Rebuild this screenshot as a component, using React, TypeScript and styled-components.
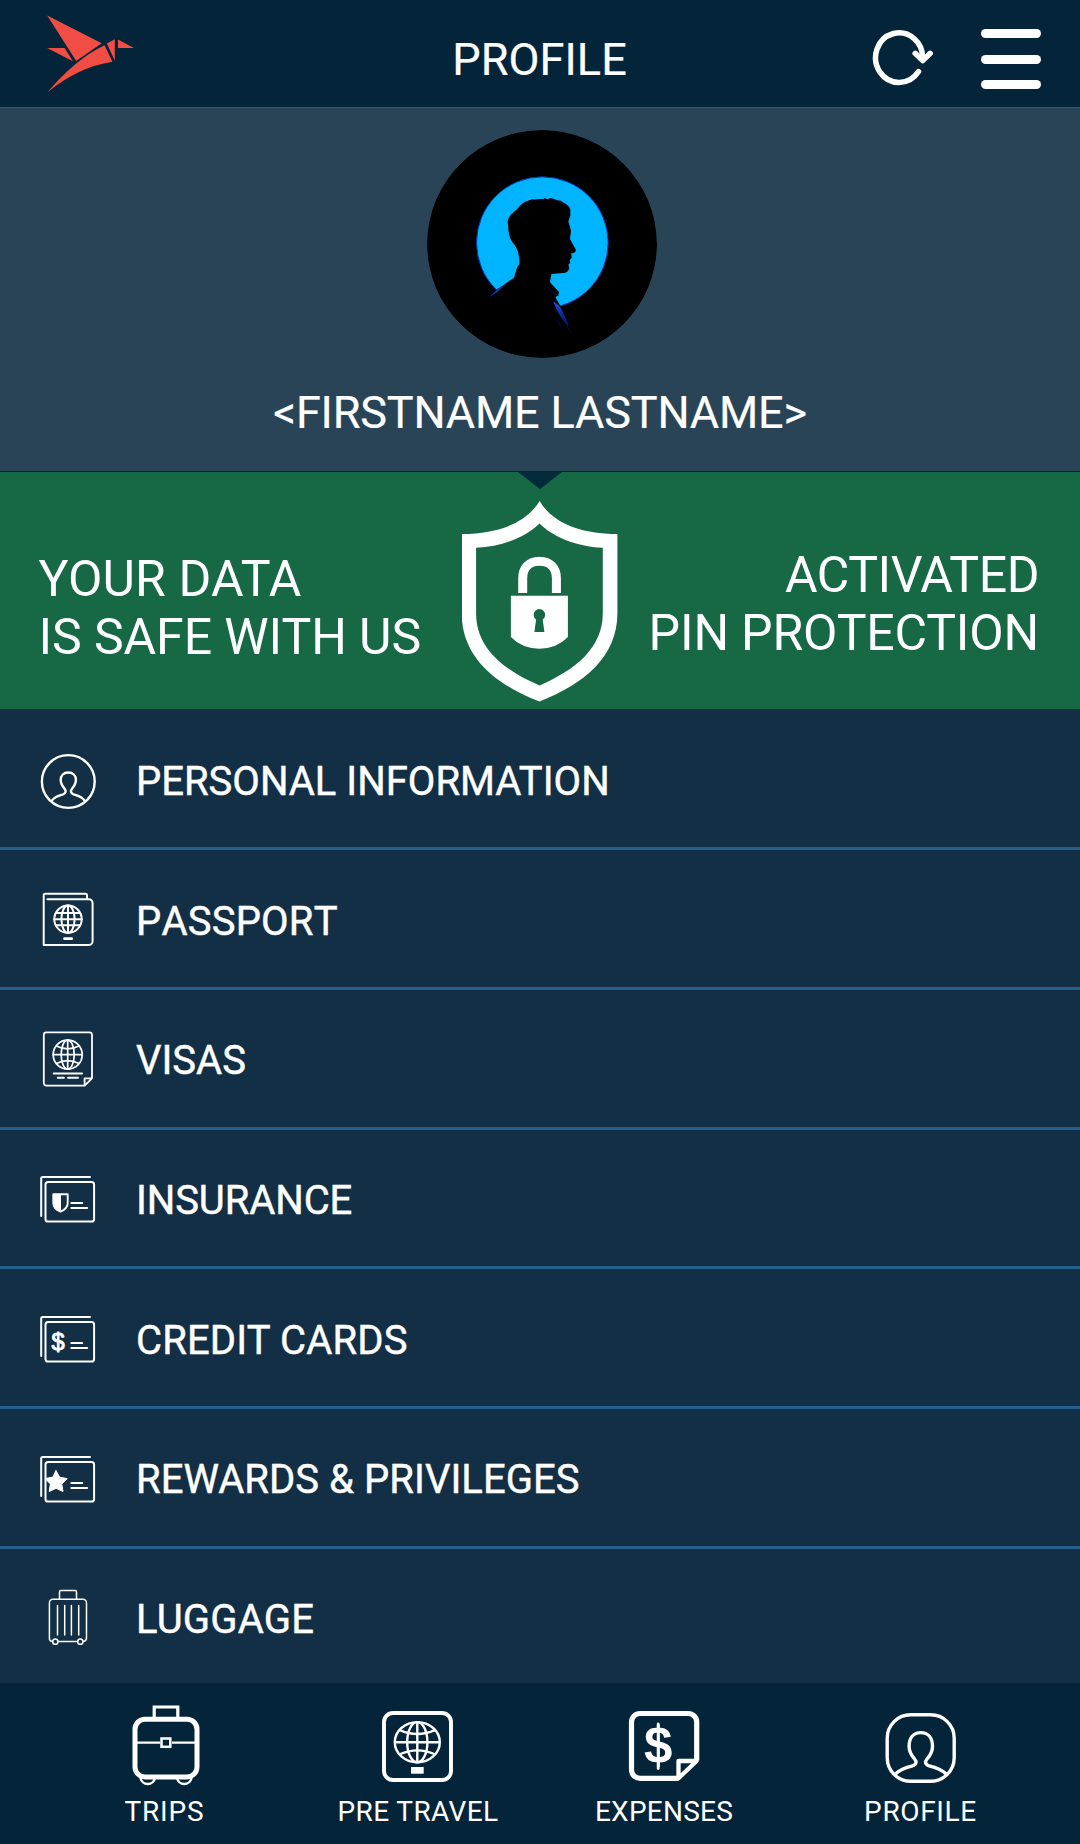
import React from 'react';
import styled, { createGlobalStyle } from 'styled-components';

const GlobalStyle = createGlobalStyle`
  * { box-sizing: border-box; }
  body { margin: 0; background: #04243a; }
`;

const Screen = styled.div`
  width: 1080px;
  height: 1844px;
  display: flex;
  flex-direction: column;
  overflow: hidden;
  background: #122f45;
  color: #fff;
  font-family: Roboto, 'Liberation Sans', sans-serif;
`;

const Header = styled.header`
  flex: none;
  height: 108px;
  display: grid;
  grid-template-columns: 1fr auto 1fr;
  background: #04243a;
  border-bottom: 1px solid #3b566a;
`;

const Logo = styled.svg`
  width: 90px;
  height: 80px;
  margin: 14px 0 0 46px;
`;

const Title = styled.h1`
  margin: 33px 1px 0 0;
  font-size: 45px;
  line-height: 54px;
  font-weight: 400;
  letter-spacing: 0.1px;
  -webkit-text-stroke: 0.2px #fff;
`;

const Actions = styled.div`
  display: flex;
  justify-content: flex-end;
  align-items: flex-start;
  gap: 45px;
  padding: 29px 39px 0 0;
`;

const IconButton = styled.button`
  display: block;
  padding: 0;
  border: 0;
  background: none;
  color: inherit;
`;

const MenuButton = styled(IconButton)`
  display: flex;
  flex-direction: column;
  gap: 16.5px;
`;

const MenuBar = styled.span`
  width: 60px;
  height: 9px;
  border-radius: 4.5px;
  background: #fff;
`;

const Hero = styled.section`
  flex: none;
  height: 364px;
  display: flex;
  flex-direction: column;
  align-items: center;
  gap: 28px;
  padding-top: 22px;
  background: #284456;
  border-bottom: 1px solid #042b3c;
`;

const Avatar = styled.svg`
  width: 230px;
  height: 228px;
  margin-left: 3px;
  border-radius: 50%;
`;

const UserName = styled.div`
  font-size: 45px;
  line-height: 54px;
  letter-spacing: -0.17px;
  -webkit-text-stroke: 0.2px #fff;
`;

const Banner = styled.section`
  flex: none;
  position: relative;
  height: 237px;
  display: grid;
  grid-template-columns: 1fr 156px 1fr;
  background: #176945;
`;

const Notch = styled.span`
  position: absolute;
  top: 0;
  left: 518px;
  border: solid transparent;
  border-width: 17px 22px 0;
  border-top-color: #042b3c;
`;

const BannerText = styled.p<{ $end?: boolean }>`
  margin: 0;
  padding: ${(p) => (p.$end ? '74px 41px 0 0' : '78px 0 0 38.5px')};
  display: flex;
  flex-direction: column;
  align-items: ${(p) => (p.$end ? 'flex-end' : 'flex-start')};
  white-space: nowrap;
  font-size: 50px;
  line-height: 58px;
`;

const BannerLine = styled.span<{ $track: number }>`
  letter-spacing: ${(p) => p.$track}px;
`;

const ShieldArt = styled.svg`
  width: 156px;
  height: 202px;
  margin-top: 28px;
`;

const List = styled.ul`
  flex: 1;
  margin: 0;
  padding: 0;
  list-style: none;
  overflow: hidden;
`;

const Row = styled.li<{ $height: number }>`
  height: ${(p) => p.$height}px;
  display: flex;
  align-items: flex-start;
  gap: 36px;
  padding: 36px 36px 0;
  border-bottom: 3px solid #245e8a;
`;

const RowIcon = styled.svg`
  flex: none;
  width: 64px;
  height: 68px;
  fill: none;
  stroke: #fff;
  stroke-linecap: round;
  stroke-linejoin: round;
`;

const RowLabel = styled.span<{ $drop: number; $track: number; $kerned: boolean }>`
  margin-top: ${(p) => p.$drop}px;
  font-size: 40px;
  line-height: 48px;
  font-kerning: ${(p) => (p.$kerned ? 'normal' : 'none')};
  letter-spacing: ${(p) => p.$track}px;
  -webkit-text-stroke: 0.45px #fff;
`;

const TabBar = styled.nav`
  flex: none;
  height: 161px;
  display: grid;
  grid-template-columns: 253px 254px 238px 275px;
  padding: 17px 0 0 38px;
  background: #04243a;
`;

const Tab = styled.a`
  display: flex;
  flex-direction: column;
  align-items: center;
  gap: 7px;
`;

const TabIcon = styled.svg`
  width: 80px;
  height: 88px;
  fill: none;
  stroke: #fff;
`;

const TabLabel = styled.span<{ $track: number }>`
  font-size: 28px;
  line-height: 34px;
  letter-spacing: ${(p) => p.$track}px;
`;

const Dollar = styled.text<{ $bold?: boolean }>`
  font-family: 'Liberation Sans', Arial, sans-serif;
  font-weight: ${(p) => (p.$bold ? 700 : 400)};
  text-anchor: middle;
  fill: #fff;
  stroke: ${(p) => (p.$bold ? 'none' : '#fff')};
  stroke-width: 1px;
`;

type GlobeProps = { cx: number; cy: number; rx: number; ry: number; w: number };

const Globe = ({ cx, cy, rx, ry, w }: GlobeProps) => {
  const dx = rx * 0.78;
  const dy = ry * 0.6;
  return (
    <g strokeWidth={w}>
      <ellipse cx={cx} cy={cy} rx={rx} ry={ry} />
      <ellipse cx={cx} cy={cy} rx={rx * 0.45} ry={ry} />
      <path d={`M${cx} ${cy - ry}V${cy + ry}M${cx - rx} ${cy}H${cx + rx}`} />
      <path d={`M${cx - dx} ${cy - dy}Q${cx} ${cy - dy * 0.35} ${cx + dx} ${cy - dy}`} />
      <path d={`M${cx - dx} ${cy + dy}Q${cx} ${cy + dy * 0.35} ${cx + dx} ${cy + dy}`} />
    </g>
  );
};

const PersonIcon = () => (
  <g strokeWidth="2.4">
    <circle cx="68.3" cy="72.5" r="26.4" />
    <path d="M51.8 91.6C54 88.5 58.5 86.5 63 85.3C66.3 84.2 66.2 81.7 64.6 79.7C61.8 76.5 60.7 73.8 60.7 71C60.7 66.5 63.8 63.5 68.3 63.5S75.9 66.5 75.9 71C75.9 73.8 74.8 76.5 72 79.7C70.4 81.7 70.3 84.2 73.6 85.3C78.1 86.5 82.6 88.5 84.8 91.6" />
  </g>
);

const PassportIcon = () => (
  <g strokeWidth="2">
    <path d="M47.3 49.3H89A3.600 3.600 0 0 1 92.600 52.900V91.300A3.600 3.600 0 0 1 89 94.900H43.700V45.300A1.600 1.600 0 0 1 45.300 43.700H85.400A1.600 1.600 0 0 1 87 45.300V49" />
    <circle cx="68" cy="69.2" r="13.7" />
    <ellipse cx="68" cy="69.2" rx="6.6" ry="13.7" />
    <path d="M68 55.5V83M54.3 69.2H81.7M56.5 63H79.5M56.5 75.300H79.500" />
    <path strokeWidth="2.7" d="M64.5 88.7H71.7" />
  </g>
);

const VisaIcon = () => (
  <g strokeWidth="1.8">
    <path d="M84.6 95.6H46.3A2.5 2.5 0 0 1 43.8 93.1V44.9A2.5 2.5 0 0 1 46.3 42.4H89.5A2.5 2.5 0 0 1 92 44.9V88.3ZV88.3H92" />
    <Globe cx={67.7} cy={64.7} rx={14.5} ry={14.5} w={1.7} />
    <path strokeWidth="2" d="M53.7 83.4H82M57.8 87.7H63.9M68 87.7H78" />
  </g>
);

const CardBase = () => (
  <g strokeWidth="2">
    <path d="M41.2 86V48.6A1.6 1.6 0 0 1 42.8 47H90" />
    <rect x="45.5" y="51.9" width="48.6" height="39.6" rx="2.6" />
    <path d="M71.3 73.1H82.2M71.3 78H87.2" />
  </g>
);

const InsuranceIcon = () => (
  <>
    <CardBase />
    <path strokeWidth="1.9" d="M53.3 64.3H67.7V73C67.7 77.5 64.5 80 60.5 81.7C56.5 80 53.3 77.5 53.3 73Z" />
    <path fill="#fff" stroke="none" d="M53 64H61V82C56 80 53 77 53 73Z" />
  </>
);

const CreditIcon = () => (
  <g transform="translate(0 1)">
    <CardBase />
    <Dollar x="58.1" y="79.6" fontSize="23.5">$</Dollar>
  </g>
);

const RewardsIcon = () => (
  <g transform="translate(0 1)">
    <CardBase />
    <path fill="#fff" strokeWidth="1" d="M56.1 60.7L59.6 67.2L67.2 68.6L61.8 74L63 81.500L56.1 78.3L49.2 81.5L50.4 74L45 68.6L52.6 67.2Z" />
  </g>
);

const LuggageIcon = () => (
  <g strokeWidth="1.5">
    <path d="M59.5 50V43A1.5 1.5 0 0 1 61 41.5H75A1.5 1.5 0 0 1 76.5 43V50" />
    <path d="M52.6 92.6A3.5 3.5 0 0 1 49.4 89V53.7A3.5 3.5 0 0 1 52.9 50.2H83A3.5 3.5 0 0 1 86.5 53.7V89A3.5 3.5 0 0 1 83 92.600M58 92.6H77.6" />
    <path d="M57.5 56.5V86M64.7 56.5V86M71.4 56.5V86M78.7 56.5V86" />
    <circle cx="55.3" cy="92.7" r="2.600" />
    <circle cx="80.3" cy="92.7" r="2.600" />
  </g>
);

const rows = [
  { label: 'PERSONAL INFORMATION', height: 141, drop: 13, track: 0, kerned: true, icon: <PersonIcon /> },
  { label: 'PASSPORT', height: 140, drop: 12, track: 0.2, kerned: false, icon: <PassportIcon /> },
  { label: 'VISAS', height: 140, drop: 11, track: 0, kerned: true, icon: <VisaIcon /> },
  { label: 'INSURANCE', height: 139, drop: 11, track: -0.1, kerned: true, icon: <InsuranceIcon /> },
  { label: 'CREDIT CARDS', height: 140, drop: 12, track: 0.15, kerned: true, icon: <CreditIcon /> },
  { label: 'REWARDS & PRIVILEGES', height: 140, drop: 11, track: 0.05, kerned: true, icon: <RewardsIcon /> },
  { label: 'LUGGAGE', height: 140, drop: 11, track: 0.2, kerned: true, icon: <LuggageIcon /> },
];

const tabs = [
  {
    label: 'TRIPS',
    track: 0.8,
    icon: (
      <>
        <path strokeWidth="3.2" d="M29.2 17V7H52.8V17" />
        <rect x="10" y="19.2" width="62" height="57.7" rx="10" strokeWidth="5" />
        <path strokeWidth="2.2" d="M10 42.6H35M47 42.6H72" />
        <rect x="36.5" y="38.5" width="8.8" height="8.3" strokeWidth="2.5" />
        <path strokeWidth="2.3" d="M15.3 78C16.5 82 19 84 22.7 84S29 82 30.2 78M51.8 78C53 82 55.5 84 59.2 84S65.5 82 66.7 78" />
      </>
    ),
  },
  {
    label: 'PRE TRAVEL',
    track: 0.4,
    icon: (
      <>
        <rect x="6" y="13" width="67" height="67" rx="9" strokeWidth="3.9" />
        <Globe cx={39.3} cy={42.2} rx={22.500} ry={20.1} w={2.4} />
        <rect x="33" y="67" width="12.7" height="6.7" fill="#fff" stroke="none" />
      </>
    ),
  },
  {
    label: 'EXPENSES',
    track: 0.25,
    icon: (
      <>
        <path strokeWidth="5.2" d="M54.5 78.3H16A8.5 8.5 0 0 1 7.5 69.8V22A8.5 8.5 0 0 1 16 13.5H64A8.5 8.5 0 0 1 72.7 22V60.5" />
        <path strokeWidth="4.3" strokeLinejoin="round" d="M54.5 78.3V61H72.6Z" />
        <Dollar $bold x="34.2" y="63.2" fontSize="51">$</Dollar>
        <path strokeWidth="2.8" strokeLinecap="round" d="M34.2 24V68.5" />
      </>
    ),
  },
  {
    label: 'PROFILE',
    track: 0.65,
    icon: (
      <g strokeWidth="3.4">
        <rect x="6.2" y="14.7" width="67" height="66.6" rx="23.5" />
        <path d="M14 74.2C19 69.5 25 67.3 31.5 65.8C35.5 64.8 36 61.5 33.5 58.8C29.5 54.5 28.1 50.5 28.1 46.5C28.1 38 32.5 32.6 39.8 32.6S51.5 38 51.5 46.5C51.5 50.5 50.1 54.5 46.1 58.8C43.6 61.5 44.1 64.8 48.1 65.8C54.6 67.3 60.6 69.5 65.6 74.2" />
      </g>
    ),
  },
];

export default function App() {
  return (
    <Screen>
      <GlobalStyle />
      <Header>
        <Logo viewBox="46 14 90 80" fill="#f04e45">
          <path d="M47.2 15.6L101.7 43.3L76.2 60.9Z" />
          <path d="M47.2 48L64.6 48L72.9 61.2Z" />
          <path d="M104.6 45.2L112.4 61.7Q78 67 47.2 92.5Q76 58.5 104.6 45.2Z" />
          <path d="M114.8 39.2V60.7L106.8 43.6Z" />
          <path d="M118 39.5L134 48H118Z" />
        </Logo>
        <Title>PROFILE</Title>
        <Actions>
          <IconButton aria-label="Refresh">
            <svg width="64" height="60" viewBox="872 29.400 64 60" display="block" fill="none" stroke="#fff" strokeWidth="5.5" strokeLinecap="round" strokeLinejoin="round">
              <path d="M918.5 72A23.5 24.8 0 1 1 922.5 60" />
              <path d="M915.2 53.7L922.7 61L930.2 53.7" />
            </svg>
          </IconButton>
          <MenuButton aria-label="Menu">
            <MenuBar />
            <MenuBar />
            <MenuBar />
          </MenuButton>
        </Actions>
      </Header>

      <Hero>
        <Avatar viewBox="79 60 690 684">
          <defs>
            <linearGradient id="lapel" x1="0" y1="0" x2="0.5" y2="1">
              <stop offset="0" stopColor="#1b56e8" />
              <stop offset="1" stopColor="#0a1470" />
            </linearGradient>
          </defs>
          <ellipse cx="424" cy="402" rx="345" ry="342" />
          <circle cx="425" cy="398" r="197.5" fill="#00b4ff" stroke="#0633b8" strokeWidth="3" />
          <path d="M225 610L262 570L283 542L340 503L350 470L356 463C357 430 348 412 338 400C322 380 324 360 321 335C323 318 336 308 350 297C362 280 376 273 395 268C408 270 418 265 428 268L432 264L440 268L450 264C465 268 470 272 480 272C492 280 506 286 509 298V318L503 334L511 362L508 387L526 420C524 428 518 430 512 430L513 443L507 450L509 458L503 464L506 474C502 487 496 489 485 489L452 492L448 517L475 546L473 556L464 562L483 594L530 640V680H280Z" />
          <path d="M262 569Q272 552 287 542L312 524L290 546Q270 556 262 569Z" fill="#0b4bd8" />
          <path d="M458 574Q478 584 486 606L505 646L496 644Q468 606 458 574Z" fill="url(#lapel)" />
          <path d="M445 535Q456 551 473 557" fill="none" stroke="#071d66" strokeWidth="3" />
          <path d="M473 628L480 652M496 640L508 665" fill="none" stroke="#070c50" strokeWidth="3" />
        </Avatar>
        <UserName>&lt;FIRSTNAME LASTNAME&gt;</UserName>
      </Hero>

      <Banner>
        <Notch />
        <BannerText>
          <BannerLine $track={0.15}>YOUR DATA</BannerLine>
          <BannerLine $track={-0.08}>IS SAFE WITH US</BannerLine>
        </BannerText>
        <ShieldArt viewBox="462.1 500 156 202" fill="#fff">
          <path fillRule="evenodd" d="M539.7 501C552 522 579 534 617.5 534V613C617.5 657 584 684 539.7 701.5C495 684 461.8 657 461.8 613V534C500 534 527 522 539.7 501ZM539.7 523.5C526 537 503 546.5 476.2 547.8V613C476.2 648 503 669.5 539.7 685.5C576 669.5 602.9 648 602.9 613V547.8C576 546.5 553 537 539.7 523.5Z" />
          <path d="M522.8 593V578.5C522.8 568 529 561.3 539.6 561.3S556.5 568 556.5 578.5V593" fill="none" stroke="#fff" strokeWidth="9" />
          <path fillRule="evenodd" d="M511 595.7H568V637Q557 648.5 539.5 648.7Q522 648.5 511 637ZM536.2 619.5L534.5 632H544.5L542.8 619.5A5.8 5.8 0 1 0 536.2 619.5Z" />
        </ShieldArt>
        <BannerText $end>
          <BannerLine $track={-0.45}>ACTIVATED</BannerLine>
          <BannerLine $track={-0.18}>PIN PROTECTION</BannerLine>
        </BannerText>
      </Banner>

      <List>
        {rows.map((row) => (
          <Row key={row.label} $height={row.height}>
            <RowIcon viewBox="36 36 64 68">{row.icon}</RowIcon>
            <RowLabel $drop={row.drop} $track={row.track} $kerned={row.kerned}>
              {row.label}
            </RowLabel>
          </Row>
        ))}
      </List>

      <TabBar>
        {tabs.map((tab) => (
          <Tab key={tab.label}>
            <TabIcon viewBox="0 0 80 88">{tab.icon}</TabIcon>
            <TabLabel $track={tab.track}>{tab.label}</TabLabel>
          </Tab>
        ))}
      </TabBar>
    </Screen>
  );
}
